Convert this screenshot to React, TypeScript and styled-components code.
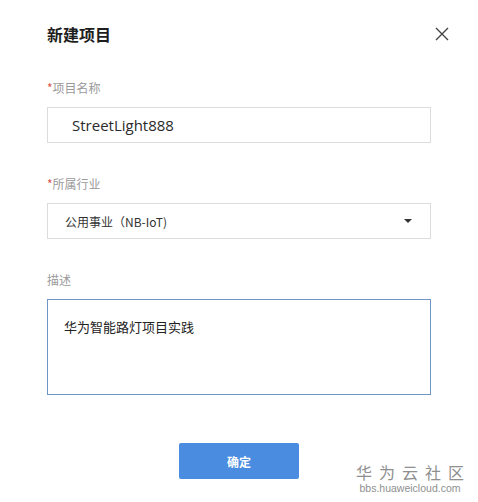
import React from 'react';
import styled, {createGlobalStyle} from 'styled-components';

const GlobalStyle = createGlobalStyle`
  html, body {
    margin: 0;
    padding: 0;
    background: #fff;
  }
  body {
    font-family: "Noto Sans", "Noto Sans CJK SC", sans-serif;
  }
`;

const Dialog = styled.div`
  position: relative;
  width: 478px;
  height: 502px;
  box-sizing: border-box;
  padding: 24px 47px 0 47px;
  background: #fff;
`;
const Header = styled.div`
  display: flex;
  justify-content: space-between;
  align-items: center;
  height: 20px;
`;
const Title = styled.h2`
  margin: 0;
  font-size: 16px;
  font-weight: 700;
  color: #1e1e1e;
  font-family: "Noto Sans CJK SC", sans-serif;
`;
const CloseButton = styled.button`
  border: 0;
  background: none;
  padding: 0;
  margin-right: -18px;
  width: 14px;
  height: 14px;
  display: flex;
  cursor: pointer;
`;
const Field = styled.div<{top: number}>`
  margin-top: ${p => p.top}px;
`;
const Label = styled.div`
  font-size: 12px;
  line-height: 14px;
  color: #9a9a9a;
  font-family: "Noto Sans CJK SC", sans-serif;
  span {
    color: #d9534f;
  }
`;
const Box = styled.div<{focused?: boolean; height: number}>`
  margin-top: 12px;
  width: 384px;
  height: ${p => p.height}px;
  box-sizing: border-box;
  border: 1px solid ${p => (p.focused ? '#6f95c6' : '#dcdcdc')};
  display: flex;
  align-items: center;
  background: #fff;
`;
const NameText = styled.span`
  padding-left: 24px;
  font-size: 15px;
  color: #2a2a2a;
  font-family: "Open Sans", sans-serif;
`;
const SelectText = styled.span`
  padding-left: 17px;
  flex: 1;
  font-size: 12px;
  color: #333;
  font-family: "Noto Sans CJK SC", sans-serif;
`;
const Caret = styled.span`
  width: 0;
  height: 0;
  border-left: 4px solid transparent;
  border-right: 4px solid transparent;
  border-top: 4px solid #333;
  margin-right: 18px;
`;
const AreaText = styled.div`
  align-self: flex-start;
  padding: 17px 0 0 16px;
  font-size: 13px;
  color: #222;
  font-family: "Noto Sans CJK SC", sans-serif;
`;
const Footer = styled.div`
  display: flex;
  justify-content: center;
  margin-top: 48px;
`;
const PrimaryButton = styled.button`
  width: 120px;
  height: 36px;
  border: 0;
  border-radius: 2px;
  background: #4a8ce0;
  color: #fff;
  font-size: 12px;
  font-weight: 700;
  font-family: "Noto Sans CJK SC", sans-serif;
`;
const Watermark = styled.div`
  position: absolute;
  right: 14px;
  bottom: 8px;
  text-align: center;
  color: #8f8f8f;
  .cn {
    font-size: 16px;
    letter-spacing: 7px;
    margin-right: -7px;
    line-height: 20px;
    font-family: "Noto Sans CJK SC", sans-serif;
  }
  .en {
    font-size: 10.5px;
    line-height: 12px;
    font-family: "Liberation Sans", sans-serif;
  }
`;

const App = () => {
  return (
    <>
      <GlobalStyle />
      <Dialog>
        <Header>
          <Title>新建项目</Title>
          <CloseButton aria-label="close">
            <svg width="14" height="14" viewBox="0 0 14 14">
              <path d="M1 1L13 13M13 1L1 13" stroke="#444" strokeWidth="1.4" />
            </svg>
          </CloseButton>
        </Header>
        <Field top={37}>
          <Label>
            <span>*</span>项目名称
          </Label>
          <Box height={36}>
            <NameText>StreetLight888</NameText>
          </Box>
        </Field>
        <Field top={34}>
          <Label>
            <span>*</span>所属行业
          </Label>
          <Box height={36}>
            <SelectText>公用事业（NB-IoT)</SelectText>
            <Caret />
          </Box>
        </Field>
        <Field top={34}>
          <Label>描述</Label>
          <Box height={96} focused>
            <AreaText>华为智能路灯项目实践</AreaText>
          </Box>
        </Field>
        <Footer>
          <PrimaryButton>确定</PrimaryButton>
        </Footer>
        <Watermark>
          <div className="cn">华为云社区</div>
          <div className="en">bbs.huaweicloud.com</div>
        </Watermark>
      </Dialog>
    </>
  );
};

export default App;
